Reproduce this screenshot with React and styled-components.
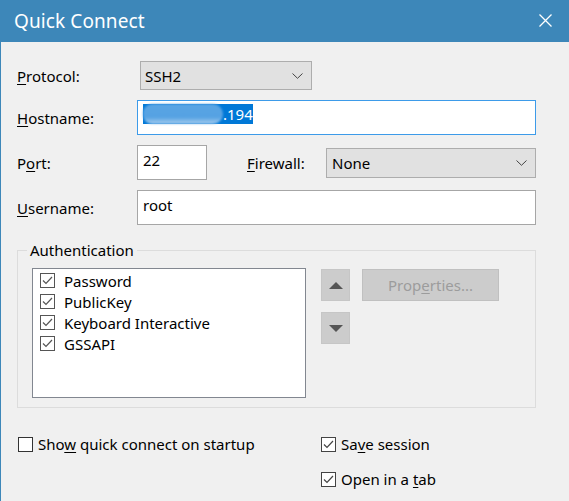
import React from 'react';
import styled, { createGlobalStyle } from 'styled-components';

const Global = createGlobalStyle`
  html, body { margin: 0; padding: 0; background: #f0f0f0; }
  body { font-family: "Noto Sans", "Open Sans", sans-serif; }
`;

const Window = styled.div`
  width: 569px;
  height: 501px;
  box-sizing: border-box;
  border-left: 1px solid #3d87b9;
  background: #f0f0f0;
  display: flex;
  flex-direction: column;
  overflow: hidden;
  font-family: "Noto Sans", "Open Sans", sans-serif;
  font-size: 15px;
  color: #000;
`;

const TitleBar = styled.div`
  flex: none;
  height: 42px;
  margin-left: -1px;
  background: #3d87b9;
  display: flex;
  align-items: center;
  justify-content: space-between;
  padding: 0 17px 0 14px;
  color: #fff;
  font-size: 19px;
  letter-spacing: 0.1px;
`;

const CloseIcon = styled.svg`
  display: block;
  width: 13px;
  height: 13px;
  margin-top: -2px;
`;

const Content = styled.div`
  padding: 19px 33px 0 16px;
  display: flex;
  flex-direction: column;
`;

const FormGrid = styled.div`
  display: grid;
  grid-template-columns: 120px 1fr;
  grid-template-rows: 29px 35px 35px 35px;
  row-gap: 10px;
  align-items: center;
`;

const Label = styled.label`
  line-height: 20px;
  white-space: nowrap;
`;

const Key = styled.span`
  text-decoration: underline;
  text-underline-offset: 2px;
  text-decoration-thickness: 1px;
`;

const Select = styled.div`
  box-sizing: border-box;
  height: ${p => p.$h || 29}px;
  width: ${p => (p.$w ? `${p.$w}px` : 'auto')};
  margin-left: ${p => p.$ml || 0}px;
  flex: ${p => (p.$w ? 'none' : '1')};
  background: #e1e1e1;
  border: 1px solid #adadad;
  display: flex;
  align-items: center;
  justify-content: space-between;
  padding: 0 8px 0 ${p => p.$pl || 4}px;
  line-height: 20px;
`;

const Chevron = styled.svg`
  display: block;
  width: 11px;
  height: 6px;
`;

const Input = styled.div`
  box-sizing: border-box;
  height: 35px;
  width: ${p => (p.$w ? `${p.$w}px` : 'auto')};
  flex: ${p => (p.$w ? 'none' : '1')};
  background: #fff;
  border: 1px solid ${p => (p.$focus ? '#3d9be9' : '#a6a6a6')};
  padding: ${p => (p.$focus ? 3 : 4)}px 5px 0;
  line-height: 20px;
  white-space: nowrap;
`;

const Selection = styled.span`
  display: inline-flex;
  align-items: center;
  height: 20px;
  background: #0078d7;
  color: #fff;
`;

const Redaction = styled.span`
  display: inline-block;
  width: 80px;
  height: 20px;
  border-radius: 9px 10px 10px 9px;
  background: linear-gradient(to bottom, #5aa5e4 0%, #55a2e3 65%, #a6ccee 100%);
  filter: blur(0.8px);
`;

const PortRow = styled.div`
  display: flex;
  align-items: center;
`;

const FirewallLabel = styled(Label)`
  width: 79px;
  margin-left: 40px;
  flex: none;
`;

const Group = styled.fieldset`
  margin: 15px 0 0 0;
  padding: 8px 14px 9px 14px;
  border: 1px solid #dcdcdc;
  min-width: 0;
`;

const Legend = styled.legend`
  margin-left: -5px;
  padding: 0 3px;
  line-height: 20px;
`;

const GroupBody = styled.div`
  display: flex;
  align-items: flex-start;
`;

const ListBox = styled.div`
  box-sizing: border-box;
  width: 274px;
  height: 130px;
  flex: none;
  background: #fff;
  border: 1px solid #828790;
  padding: 1px 0 0 7px;
`;

const ListItem = styled.div`
  height: 21px;
  display: flex;
  align-items: center;
  gap: ${p => p.$gap || 9}px;
  white-space: nowrap;
  line-height: 20px;
`;

const Box = styled.span`
  box-sizing: border-box;
  width: 15px;
  height: 15px;
  flex: none;
  background: #fff;
  border: 1px solid ${p => p.$c || '#555'};
  display: flex;
  align-items: center;
  justify-content: center;
`;

const ArrowColumn = styled.div`
  margin-left: 15px;
  display: flex;
  flex-direction: column;
  gap: 11px;
  margin-top: 1px;
`;

const ArrowButton = styled.div`
  box-sizing: border-box;
  width: 29px;
  height: 32px;
  background: #cccccc;
  border: 1px solid #c6c6c6;
  display: flex;
  align-items: center;
  justify-content: center;
`;

const PropButton = styled.div`
  box-sizing: border-box;
  margin: 1px 0 0 12px;
  width: 137px;
  height: 32px;
  background: #cccccc;
  border: 1px solid #c0c0c0;
  color: #9c9c9c;
  display: flex;
  align-items: center;
  justify-content: center;
  line-height: 20px;
`;

const Options = styled.div`
  margin: 26px 0 0 1px;
  display: grid;
  grid-template-columns: 303px auto;
  grid-auto-rows: 20px;
  row-gap: 15px;
  align-items: center;
`;

const Spacer = styled.div``;

function Check({ checked, color }) {
  return (
    <Box $c={color}>
      {checked && (
        <svg width="13" height="13" viewBox="0 0 13 13">
          <polyline points="2,6.5 5,9.5 11,3" fill="none" stroke={color || '#555'} strokeWidth="1.2" />
        </svg>
      )}
    </Box>
  );
}

function Down() {
  return (
    <Chevron viewBox="0 0 11 6">
      <polyline points="0.5,0.5 5.5,5.3 10.5,0.5" fill="none" stroke="#444" strokeWidth="1" />
    </Chevron>
  );
}

export default function App() {
  return (
    <>
      <Global />
      <Window>
        <TitleBar>
          <span>Quick Connect</span>
          <CloseIcon viewBox="0 0 13 13">
            <path d="M0.5 0.5 L12.5 12.5 M12.5 0.5 L0.5 12.5" stroke="#fff" strokeWidth="1.3" />
          </CloseIcon>
        </TitleBar>
        <Content>
          <FormGrid>
            <Label><Key>P</Key>rotocol:</Label>
            <Select $w={172} $ml={3} $pl={4}>
              <span>SSH2</span>
              <Down />
            </Select>

            <Label><Key>H</Key>ostname:</Label>
            <Input $focus>
              <Selection>
                <Redaction />
                <span>.194</span>
              </Selection>
            </Input>

            <Label>P<Key>o</Key>rt:</Label>
            <PortRow>
              <Input $w={70}>22</Input>
              <FirewallLabel><Key>F</Key>irewall:</FirewallLabel>
              <Select $h={30} $pl={5}>
                <span>None</span>
                <Down />
              </Select>
            </PortRow>

            <Label><Key>U</Key>sername:</Label>
            <Input>root</Input>
          </FormGrid>

          <Group>
            <Legend>Authentication</Legend>
            <GroupBody>
              <ListBox>
                {['Password', 'PublicKey', 'Keyboard Interactive', 'GSSAPI'].map(t => (
                  <ListItem key={t}>
                    <Check checked />
                    <span>{t}</span>
                  </ListItem>
                ))}
              </ListBox>
              <ArrowColumn>
                <ArrowButton>
                  <svg width="14" height="7" viewBox="0 0 14 7"><polygon points="0,7 7,0 14,7" fill="#555" /></svg>
                </ArrowButton>
                <ArrowButton>
                  <svg width="14" height="7" viewBox="0 0 14 7"><polygon points="0,0 14,0 7,7" fill="#555" /></svg>
                </ArrowButton>
              </ArrowColumn>
              <PropButton>Prop<Key>e</Key>rties...</PropButton>
            </GroupBody>
          </Group>

          <Options>
            <ListItem $gap={5}>
              <Check color="#333" />
              <span>Sho<Key>w</Key> quick connect on startup</span>
            </ListItem>
            <ListItem $gap={5}>
              <Check checked color="#444" />
              <span>Sa<Key>v</Key>e session</span>
            </ListItem>
            <Spacer />
            <ListItem $gap={5}>
              <Check checked color="#444" />
              <span>Open in a <Key>t</Key>ab</span>
            </ListItem>
          </Options>
        </Content>
      </Window>
    </>
  );
}
